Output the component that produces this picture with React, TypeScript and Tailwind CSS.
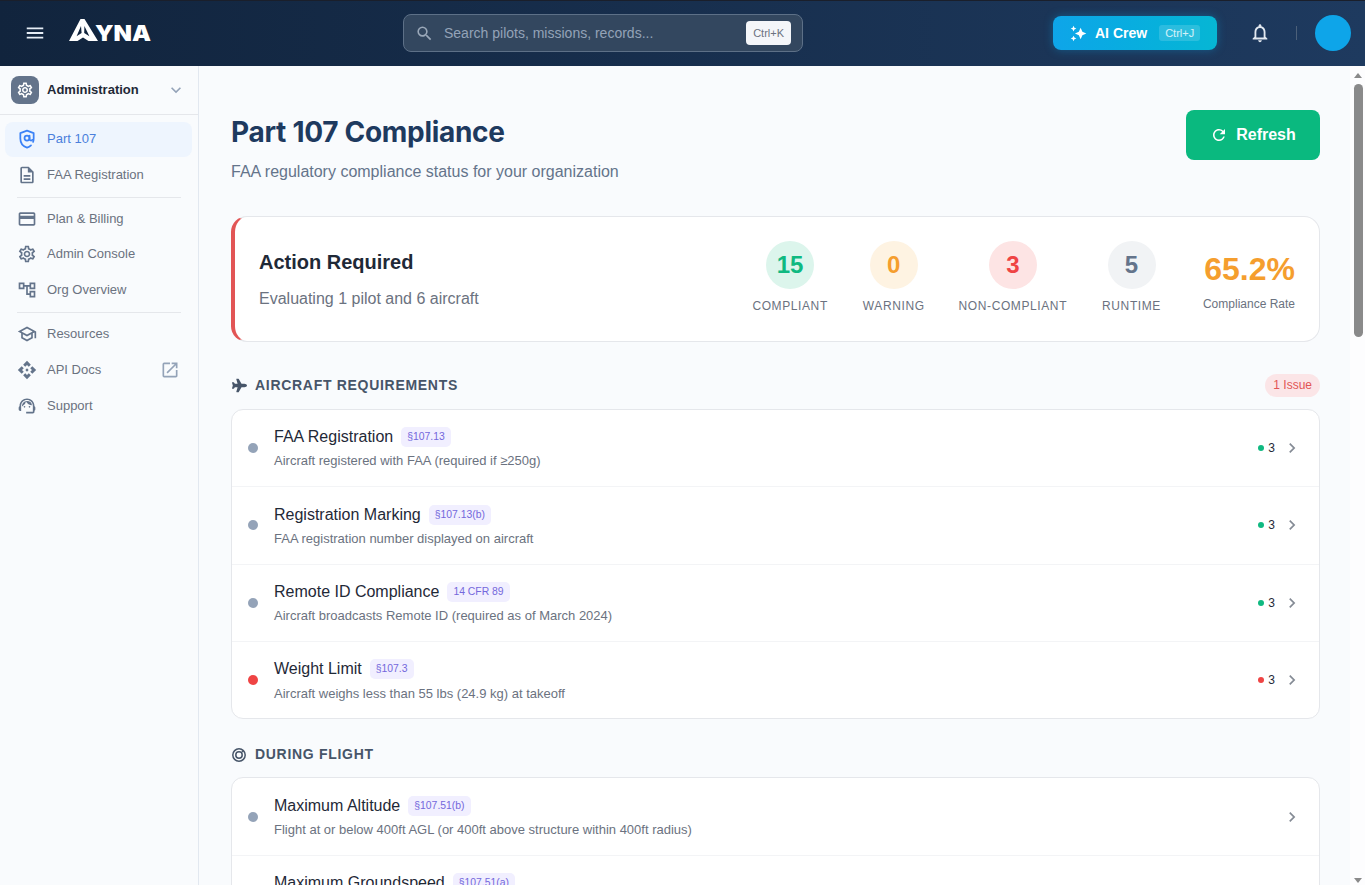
import React from "react";
import {
  MdMenu, MdSearch, MdOutlineNotifications, MdRefresh, MdOutlineSettings, MdOutlineDescription,
  MdOutlineCreditCard, MdOutlineAccountTree, MdOutlineSchool, MdOutlineApi, MdOutlineSupportAgent,
  MdOutlineOpenInNew, MdKeyboardArrowDown, MdChevronRight, MdAutoAwesome,
} from "react-icons/md";
import { FaPlane } from "react-icons/fa";

type Row = { t: string; b: string; d: string; dot?: "red"; n?: { c: "green" | "red"; v: number } };
type Section = { title: string; icon: React.ReactNode; issue?: string; rows: Row[] };

const g3 = { c: "green" as const, v: 3 };

function TargetIcon() {
  return (
    <svg viewBox="0 0 16 16" className="h-[16px] w-[16px] text-[#475569]" fill="none" stroke="currentColor">
      <circle cx="8" cy="8" r="6.2" strokeWidth="1.5" />
      <circle cx="8" cy="8" r="3.2" strokeWidth="1.5" />
      <path d="M10.4 5.6 12.6 3.4" strokeWidth="1.3" />
    </svg>
  );
}

const sections: Section[] = [
  {
    title: "Aircraft Requirements", icon: <FaPlane className="text-[15px] text-[#475569]" />, issue: "1 Issue",
    rows: [
      { t: "FAA Registration", b: "§107.13", d: "Aircraft registered with FAA (required if ≥250g)", n: g3 },
      { t: "Registration Marking", b: "§107.13(b)", d: "FAA registration number displayed on aircraft", n: g3 },
      { t: "Remote ID Compliance", b: "14 CFR 89", d: "Aircraft broadcasts Remote ID (required as of March 2024)", n: g3 },
      { t: "Weight Limit", b: "§107.3", d: "Aircraft weighs less than 55 lbs (24.9 kg) at takeoff", dot: "red", n: { c: "red", v: 3 } },
    ],
  },
  {
    title: "During Flight", icon: <TargetIcon />,
    rows: [
      { t: "Maximum Altitude", b: "§107.51(b)", d: "Flight at or below 400ft AGL (or 400ft above structure within 400ft radius)" },
      { t: "Maximum Groundspeed", b: "§107.51(a)", d: "Groundspeed does not exceed 87 knots (100 mph)" },
    ],
  },
];

function ShieldAt({ className }: { className?: string }) {
  return (
    <svg viewBox="0 0 24 24" className={className} fill="none" stroke="currentColor" strokeWidth="2.1" strokeLinejoin="round" strokeLinecap="round">
      <path d="M16.8 19.6C15.5 20.8 13.9 21.7 12 22.3 7.2 20.8 4 16.6 4 11.4V5l8-3 8 3v6.4c0 1.4-.2 2.7-.7 4" />
      <circle cx="12" cy="10.8" r="3" />
      <path d="M15 7.8v4.2c0 1.9 2.4 2.4 3.4 1" />
    </svg>
  );
}

function Logo() {
  return (
    <div className="mb-[6px] flex items-end">
      <svg viewBox="0 0 29 22" className="h-[22px] w-[29px]">
        <path fill="#fff" d="M11.5 0h4L29 22h-9.5l-5.5-3.6L8.5 22H0Z" />
        <path fill="#11243d" d="M12 7 7.6 17.2 12.6 14ZM15.4 7l5 10.2-5.2-3.2Z" />
      </svg>
      <span className="-ml-[3px] inline-block w-[55px] origin-left scale-x-[1.09] font-['Inter',sans-serif] text-[22px] font-black leading-[16px] text-white">YNA</span>
    </div>
  );
}

function NavItem({ icon, label, active, trailing }: { icon: React.ReactNode; label: string; active?: boolean; trailing?: React.ReactNode }) {
  return (
    <div className={`ml-[5px] mr-[6px] flex h-[35px] shrink-0 items-center gap-[10px] rounded-lg pl-[12px] pr-[12px] text-[13px] ${active ? "bg-[#eef5fe] pb-[2px] text-[#4a80dc]" : "text-[#6b7280]"}`}>
      <span className={`flex w-[20px] justify-center text-[20px] ${active ? "text-[#3b82f6]" : "text-[#64748b]"}`}>{icon}</span>
      <span className="flex-1">{label}</span>
      {trailing}
    </div>
  );
}

function Stat({ v, label, text, bg, className = "" }: { v: string; label: string; text: string; bg: string; className?: string }) {
  return (
    <div className={`mb-[2px] flex flex-col items-center ${className}`}>
      <div className={`flex h-[48px] w-[48px] items-center justify-center rounded-full text-[24px] font-bold ${bg} ${text}`}>{v}</div>
      <div className="mt-[8px] text-[12px] leading-[18px] tracking-[0.6px] text-[#6b7280]">{label}</div>
    </div>
  );
}

function ListRow({ r, last }: { r: Row; last: boolean }) {
  return (
    <div className={`flex items-center pl-[16px] pr-[17px] ${last ? "h-[76.5px]" : "h-[77.33px] border-b border-[#f3f4f6]"}`}>
      <span className={`h-[10px] w-[10px] shrink-0 rounded-full ${r.dot === "red" ? "bg-[#ef4444]" : "bg-[#94a3b8]"}`} />
      <div className="ml-[16px] min-w-0 flex-1">
        <div className="flex items-center gap-[8px]">
          <span className="text-[16px] leading-[24px] text-[#1f2937]">{r.t}</span>
          <span className="rounded-[5px] bg-[#f1efff] px-[6px] py-[2px] text-[10.4px] leading-[16px] text-[#7468dc]">{r.b}</span>
        </div>
        <div className="mb-[0.7px] mt-[2.3px] text-[13px] leading-[19px] text-[#6b7280]">{r.d}</div>
      </div>
      {r.n && (
        <div className="mr-[7px] flex items-center gap-[4px] text-[12px] text-[#1f2937]">
          <span className={`h-[6px] w-[6px] rounded-full ${r.n.c === "green" ? "bg-[#10b981]" : "bg-[#ef4444]"}`} />
          {r.n.v}
        </div>
      )}
      <MdChevronRight className="text-[20px] text-[#858b95]" />
    </div>
  );
}

function Scrollbar() {
  return (
    <div className="flex w-[15px] shrink-0 flex-col items-center bg-[#fdfdfe] pl-px pt-[7px]">
      <div className="h-0 w-0 border-x-[4.5px] border-b-[5px] border-x-transparent border-b-[#8a8a8a]" />
      <div className="mt-[6px] h-[253px] w-[9px] rounded-[4.5px] bg-[#8a8a8a]" />
      <div className="mb-[2px] mt-auto h-0 w-0 border-x-[4.5px] border-t-[5px] border-x-transparent border-t-[#8a8a8a]" />
    </div>
  );
}

export default function App() {
  return (
    <div className="flex h-[885px] flex-col overflow-hidden bg-[#f9fbfd] font-['Liberation_Sans',Arial,sans-serif]">
      <header className="flex h-[66px] shrink-0 items-center border-t border-[#1a1f2b] bg-gradient-to-r from-[#11243d] to-[#1e3a5f] pb-px pl-[24px] pr-[14px]">
        <MdMenu className="text-[22px] text-[#e6edf5]" />
        <div className="ml-[23px]"><Logo /></div>
        <div className="ml-[253px] flex h-[38px] w-[400px] items-center rounded-lg border border-[#5d7087] bg-[#33475f] pl-[11px] pr-[11px]">
          <MdSearch className="text-[19px] text-[#9aa8b9]" />
          <span className="ml-[10px] flex-1 text-[14px] text-[#94a3b8]">Search pilots, missions, records...</span>
          <span className="rounded-[4px] bg-[#f4f6f9] px-[7px] py-[4px] text-[11px] leading-[16px] text-[#6b7280]">Ctrl+K</span>
        </div>
        <div className="ml-[250px] flex h-[34px] w-[164px] items-center rounded-lg bg-gradient-to-r from-[#0ea5e9] to-[#06b6d4] pl-[17px] shadow-[0_0_10px_rgba(14,165,233,0.35)]">
          <MdAutoAwesome className="-scale-x-100 text-[17px] text-white" />
          <span className="ml-[8px] text-[14px] font-bold text-white">AI Crew</span>
          <span className="ml-[12px] rounded-[3px] bg-white/15 px-[6px] py-[1px] text-[11px] leading-[14px] text-white/80">Ctrl+J</span>
        </div>
        <MdOutlineNotifications className="ml-[32px] text-[22px] text-[#e2e8f0]" />
        <div className="ml-[25px] h-[14px] w-px bg-[#4c6079]" />
        <div className="ml-[18px] h-[36px] w-[36px] rounded-full bg-[#0ea5e9]" />
      </header>

      <div className="flex min-h-0 flex-1">
        <aside className="flex w-[199px] shrink-0 flex-col border-r border-[#e2e8f0] bg-[#f9fbfd]">
          <div className="flex h-[49px] shrink-0 items-center border-b border-[#e5e7eb] pl-[11px] pr-[12px]">
            <div className="flex h-[28px] w-[28px] items-center justify-center rounded-lg bg-[#64748b]">
              <MdOutlineSettings className="text-[18px] text-white" />
            </div>
            <span className="ml-[8px] flex-1 text-[13px] font-bold text-[#1f2937]">Administration</span>
            <MdKeyboardArrowDown className="text-[20px] text-[#94a3b8]" />
          </div>
          <div className="flex flex-col pt-[7px]">
            <NavItem active icon={<ShieldAt className="h-[20px] w-[20px]" />} label="Part 107" />
            <NavItem icon={<MdOutlineDescription />} label="FAA Registration" />
            <div className="mx-[17px] mb-[3px] mt-[5px] h-px bg-[#e5e7eb]" />
            <NavItem icon={<MdOutlineCreditCard />} label="Plan & Billing" />
            <NavItem icon={<MdOutlineSettings />} label="Admin Console" />
            <div className="mt-px"><NavItem icon={<MdOutlineAccountTree />} label="Org Overview" /></div>
            <div className="mx-[17px] mb-[3px] mt-[5px] h-px bg-[#e5e7eb]" />
            <NavItem icon={<MdOutlineSchool />} label="Resources" />
            <div className="mt-px"><NavItem icon={<MdOutlineApi />} label="API Docs" trailing={<MdOutlineOpenInNew className="text-[20px] text-[#94a3b8]" />} /></div>
            <div className="mt-px"><NavItem icon={<MdOutlineSupportAgent />} label="Support" /></div>
          </div>
        </aside>

        <main className="min-w-0 flex-1 overflow-hidden pl-[32px] pr-[30px] pt-[44px]">
          <div className="flex items-start justify-between">
            <div className="mt-px">
              <h1 className="font-['Inter',sans-serif] text-[28px] font-bold leading-[42px] tracking-[-0.3px] text-[#1e3a5f]">Part 107 Compliance</h1>
              <p className="mt-[7px] text-[16px] leading-[24px] text-[#64748b]">FAA regulatory compliance status for your organization</p>
            </div>
            <button className="flex h-[50px] w-[134px] items-center justify-center gap-[8px] rounded-lg bg-[#0ab97f] text-[16px] font-bold text-white">
              <MdRefresh className="text-[18px]" /> Refresh
            </button>
          </div>

          <section className="mt-[32px] flex h-[126px] items-center justify-between rounded-2xl border border-l-4 border-[#e5e7eb] border-l-[#e25555] bg-white pl-[24px] pr-[24px]">
            <div className="mb-px">
              <div className="text-[20px] font-bold leading-[30px] text-[#1f2937]">Action Required</div>
              <div className="mt-[10px] text-[16px] leading-[24px] text-[#6b7280]">Evaluating 1 pilot and 6 aircraft</div>
            </div>
            <div className="flex items-center gap-[35px]">
              <Stat v="15" label="COMPLIANT" text="text-[#10b981]" bg="bg-[#dcf5ec]" />
              <Stat v="0" label="WARNING" text="text-[#f59e2e]" bg="bg-[#fef3e2]" />
              <Stat v="3" label="NON-COMPLIANT" text="text-[#ef4444]" bg="bg-[#fde4e4]" className="-ml-px" />
              <Stat v="5" label="RUNTIME" text="text-[#64748b]" bg="bg-[#f1f3f5]" />
              <div className="ml-[7px] flex flex-col items-end">
                <div className="text-[32px] font-bold leading-[46px] text-[#f59e2e]">65.2%</div>
                <div className="mt-[3px] text-[12px] leading-[18px] text-[#6b7280]">Compliance Rate</div>
              </div>
            </div>
          </section>

          {sections.map((s, i) => (
            <section key={s.title} className={i === 0 ? "mt-[32px]" : "mt-[24px]"}>
              <div className={`flex h-[23px] items-center ${i === 0 ? "mb-[12px]" : "mb-[11px]"}`}>
                <span className="flex w-[16px] justify-center">{s.icon}</span>
                <h2 className="ml-[8px] flex-1 text-[14px] font-bold uppercase leading-[21px] tracking-[0.7px] text-[#475569]">{s.title}</h2>
                {s.issue && <span className="rounded-full bg-[#fbe5e7] px-[8px] py-[3px] text-[12px] leading-[17px] text-[#e25555]">{s.issue}</span>}
              </div>
              <div className="overflow-hidden rounded-xl border border-[#e5e7eb] bg-white">
                {s.rows.map((r, j) => <ListRow key={r.t} r={r} last={j === s.rows.length - 1} />)}
              </div>
            </section>
          ))}
        </main>
        <Scrollbar />
      </div>
    </div>
  );
}
